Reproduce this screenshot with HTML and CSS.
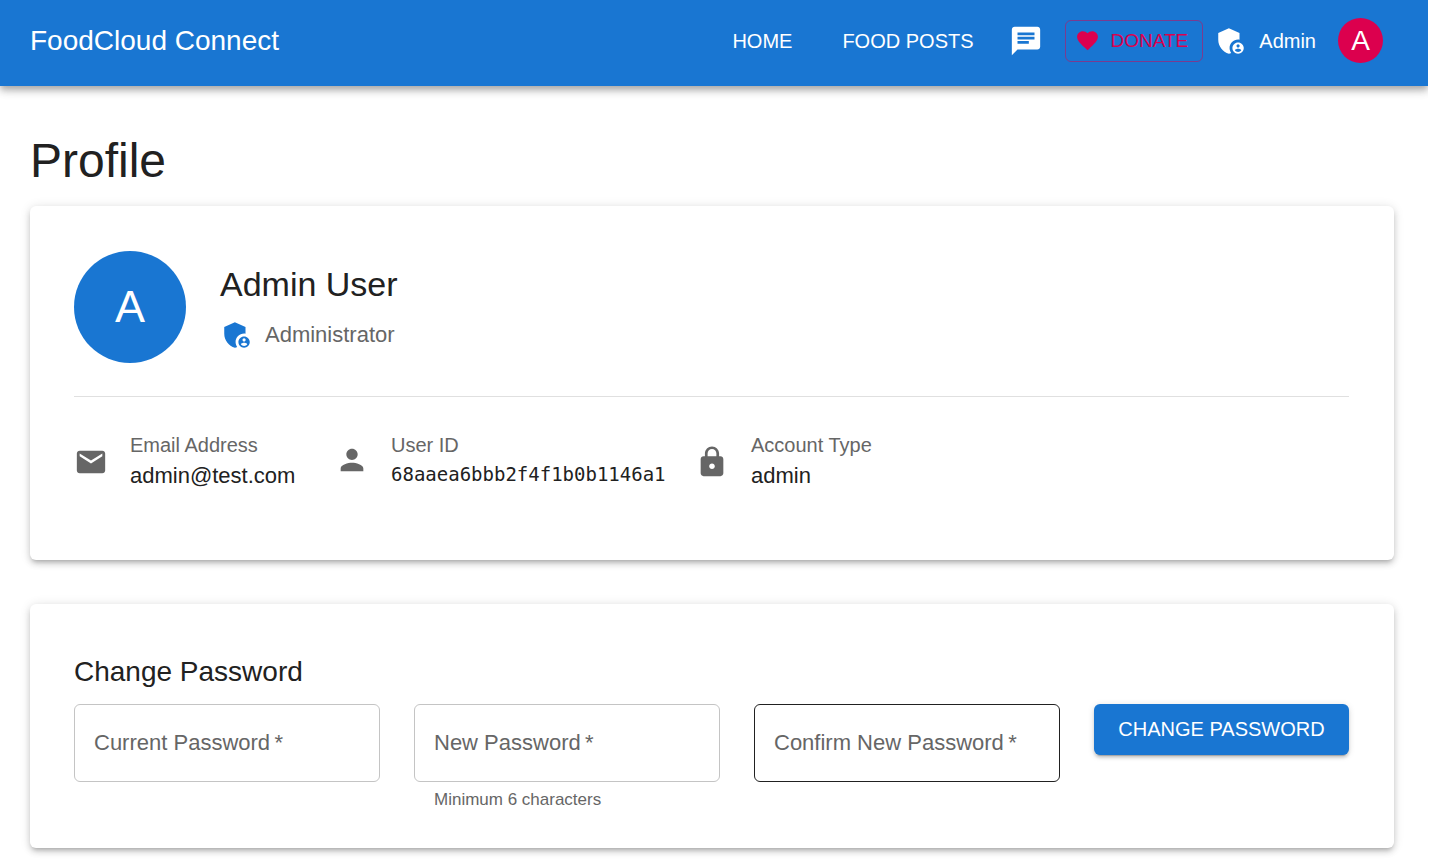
FILE: index.html
```html
<!DOCTYPE html>
<html lang="en">
<head>
<meta charset="utf-8">
<meta name="viewport" content="width=device-width, initial-scale=1">
<title>FoodCloud Connect – Profile</title>
<link rel="stylesheet" href="styles.css">
</head>
<body>
<header class="app-bar">
  <div class="brand">FoodCloud Connect</div>
  <nav class="nav">
    <a class="nav-link" href="#">HOME</a>
    <a class="nav-link" href="#">FOOD POSTS</a>
    <button class="icon-button" type="button" aria-label="Messages">
      <svg class="icon" viewBox="0 0 24 24" aria-hidden="true"><path d="M20 2H4c-1.1 0-1.99.9-1.99 2L2 22l4-4h14c1.1 0 2-.9 2-2V4c0-1.1-.9-2-2-2zM6 9h12v2H6V9zm8 5H6v-2h8v2zm4-6H6V6h12v2z"/></svg>
    </button>
    <button class="donate" type="button">
      <svg class="icon icon-small" viewBox="0 0 24 24" aria-hidden="true"><path d="m12 21.35-1.45-1.32C5.4 15.36 2 12.28 2 8.5 2 5.42 4.42 3 7.5 3c1.74 0 3.41.81 4.5 2.09C13.09 3.81 14.76 3 16.5 3 19.58 3 22 5.42 22 8.5c0 3.78-3.4 6.86-8.55 11.54L12 21.35z"/></svg>
      DONATE
    </button>
    <div class="role">
      <svg class="icon" viewBox="0 0 24 24" aria-hidden="true"><path d="M17 11c.34 0 .67.04 1 .09V6.27L10.5 3 3 6.27v4.91c0 4.54 3.2 8.79 7.5 9.82.55-.13 1.08-.32 1.6-.55-.69-.98-1.1-2.17-1.1-3.45 0-3.31 2.69-6 6-6z"/><path d="M17 13c-2.21 0-4 1.79-4 4s1.79 4 4 4 4-1.79 4-4-1.79-4-4-4zm0 1.38c.62 0 1.12.51 1.12 1.12s-.51 1.12-1.12 1.12-1.12-.51-1.12-1.12.5-1.12 1.12-1.12zm0 5.37c-.93 0-1.74-.46-2.24-1.17.05-.72 1.51-1.08 2.24-1.08s2.19.36 2.24 1.08c-.5.71-1.31 1.17-2.24 1.17z"/></svg>
      <span>Admin</span>
    </div>
    <button class="avatar avatar-small" type="button" aria-label="Account menu">A</button>
  </nav>
</header>

<main class="page">
  <h1 class="page-title">Profile</h1>

  <section class="card">
    <div class="identity">
      <div class="avatar avatar-large">A</div>
      <div class="identity-text">
        <h2 class="user-name">Admin User</h2>
        <div class="user-role">
          <svg class="icon icon-primary" viewBox="0 0 24 24" aria-hidden="true"><path d="M17 11c.34 0 .67.04 1 .09V6.27L10.5 3 3 6.27v4.91c0 4.54 3.2 8.79 7.5 9.82.55-.13 1.08-.32 1.6-.55-.69-.98-1.1-2.17-1.1-3.45 0-3.31 2.69-6 6-6z"/><path d="M17 13c-2.21 0-4 1.79-4 4s1.79 4 4 4 4-1.79 4-4-1.79-4-4-4zm0 1.38c.62 0 1.12.51 1.12 1.12s-.51 1.12-1.12 1.12-1.12-.51-1.12-1.12.5-1.12 1.12-1.12zm0 5.37c-.93 0-1.74-.46-2.24-1.17.05-.72 1.51-1.08 2.24-1.08s2.19.36 2.24 1.08c-.5.71-1.31 1.17-2.24 1.17z"/></svg>
          <span>Administrator</span>
        </div>
      </div>
    </div>
    <hr class="divider">
    <div class="details">
      <div class="detail">
        <svg class="icon" viewBox="0 0 24 24" aria-hidden="true"><path d="M20 4H4c-1.1 0-1.99.9-1.99 2L2 18c0 1.1.9 2 2 2h16c1.1 0 2-.9 2-2V6c0-1.1-.9-2-2-2zm0 4-8 5-8-5V6l8 5 8-5v2z"/></svg>
        <div>
          <div class="detail-label">Email Address</div>
          <div class="detail-value">admin@test.com</div>
        </div>
      </div>
      <div class="detail">
        <svg class="icon" viewBox="0 0 24 24" aria-hidden="true"><path d="M12 12c2.21 0 4-1.79 4-4s-1.79-4-4-4-4 1.79-4 4 1.79 4 4 4zm0 2c-2.67 0-8 1.34-8 4v2h16v-2c0-2.66-5.33-4-8-4z"/></svg>
        <div>
          <div class="detail-label">User ID</div>
          <div class="detail-value detail-code">68aaea6bbb2f4f1b0b1146a1</div>
        </div>
      </div>
      <div class="detail">
        <svg class="icon" viewBox="0 0 24 24" aria-hidden="true"><path d="M18 8h-1V6c0-2.76-2.24-5-5-5S7 3.24 7 6v2H6c-1.1 0-2 .9-2 2v10c0 1.1.9 2 2 2h12c1.1 0 2-.9 2-2V10c0-1.1-.9-2-2-2zm-6 9c-1.1 0-2-.9-2-2s.9-2 2-2 2 .9 2 2-.9 2-2 2zm3.1-9H8.9V6c0-1.71 1.39-3.1 3.1-3.1s3.1 1.39 3.1 3.1v2z"/></svg>
        <div>
          <div class="detail-label">Account Type</div>
          <div class="detail-value">admin</div>
        </div>
      </div>
    </div>
  </section>

  <section class="card card-form">
    <h2 class="section-title">Change Password</h2>
    <form class="password-form">
      <div class="field">
        <input class="field-input" type="password" id="current-password" required>
        <label class="field-label" for="current-password">Current Password&thinsp;*</label>
      </div>
      <div class="field">
        <input class="field-input" type="password" id="new-password" aria-describedby="new-password-help" required>
        <label class="field-label" for="new-password">New Password&thinsp;*</label>
        <p class="field-help" id="new-password-help">Minimum 6 characters</p>
      </div>
      <div class="field">
        <input class="field-input field-input-active" type="password" id="confirm-password" required>
        <label class="field-label" for="confirm-password">Confirm New Password&thinsp;*</label>
      </div>
      <button class="submit" type="submit">CHANGE PASSWORD</button>
    </form>
  </section>
</main>
</body>
</html>
```
FILE: styles.css
```css
:root {
  --primary: #1976d2;
  --secondary: #dc004e;
  --text: #212121;
  --muted: #666666;
  --shadow: 0 4px 1px -3px rgba(0, 0, 0, 0.2), 0 3px 3px 0 rgba(0, 0, 0, 0.14), 0 1px 7px 0 rgba(0, 0, 0, 0.12);
  --shadow-card: 0 4px 4px -3px rgba(0, 0, 0, 0.2), 0 4px 6px 0 rgba(0, 0, 0, 0.14), 0 1px 11px 0 rgba(0, 0, 0, 0.12);
  --shadow-bar: 0 3px 6px -1px rgba(0, 0, 0, 0.2), 0 6px 7px 0 rgba(0, 0, 0, 0.14), 0 1px 14px 0 rgba(0, 0, 0, 0.12);
}

* {
  box-sizing: border-box;
}

body {
  margin: 0 12px 0 0;
  background: #ffffff;
  color: var(--text);
  font-family: "Liberation Sans", Arial, sans-serif;
  font-size: 22px;
  line-height: 34px;
}

button,
input {
  font-family: inherit;
}

h1,
h2,
p {
  margin: 0;
  font-weight: 400;
}

.icon {
  display: block;
  flex: none;
  width: 34px;
  height: 34px;
  fill: currentColor;
}

.icon-small {
  width: 25px;
  height: 25px;
}

.icon-primary {
  color: var(--primary);
}

.app-bar {
  display: flex;
  align-items: center;
  justify-content: space-between;
  padding: 18px 45px 23px 30px;
  background: var(--primary);
  color: #ffffff;
  box-shadow: var(--shadow-bar);
}

.brand {
  font-size: 28px;
}

.nav {
  display: flex;
  align-items: center;
  font-size: 20px;
}

.nav-link {
  margin-right: 4px;
  padding: 0 23px;
  color: inherit;
  text-decoration: none;
}

.icon-button {
  margin: 0 22px 0 8px;
  padding: 0;
  border: 0;
  background: none;
  color: inherit;
}

.donate {
  display: flex;
  align-items: center;
  gap: 11px;
  height: 42px;
  margin-right: 11px;
  padding: 0 14px 0 9px;
  border: 1px solid rgba(220, 0, 78, 0.5);
  border-radius: 6px;
  background: none;
  color: var(--secondary);
  font-size: 19px;
}

.role {
  display: flex;
  align-items: center;
  gap: 11px;
  margin-right: 22px;
}

.avatar {
  display: flex;
  flex: none;
  align-items: center;
  justify-content: center;
  padding: 0;
  border: 0;
  border-radius: 50%;
  color: #ffffff;
}

.avatar-small {
  width: 45px;
  height: 45px;
  background: var(--secondary);
  font-size: 28px;
}

.avatar-large {
  width: 112px;
  height: 112px;
  background: var(--primary);
  font-size: 45px;
}

.page {
  padding: 45px 34px 20px 30px;
}

.page-title {
  margin-bottom: 16px;
  font-size: 48px;
  line-height: 59px;
}

.card {
  margin-bottom: 44px;
  padding: 45px 45px 67px 44px;
  border-radius: 6px;
  background: #ffffff;
  box-shadow: var(--shadow-card);
}

.card-form {
  margin-bottom: 0;
  padding-bottom: 34px;
}

.identity {
  display: flex;
  align-items: center;
  gap: 34px;
}

.user-name {
  margin-bottom: 11px;
  font-size: 34px;
  line-height: 45px;
}

.user-role {
  display: flex;
  align-items: center;
  gap: 11px;
  color: var(--muted);
}

.divider {
  height: 1px;
  margin: 33px 0 34px;
  border: 0;
  background: #e0e0e0;
}

.details {
  display: grid;
  grid-template-columns: 227px 326px auto;
  align-items: start;
  gap: 34px;
}

.detail {
  display: flex;
  align-items: center;
  gap: 22px;
  color: var(--muted);
}

.detail-label {
  font-size: 20px;
  line-height: 28px;
}

.detail-value {
  color: var(--text);
}

.detail-code {
  font-family: "DejaVu Sans Mono", monospace;
  font-size: 19px;
  line-height: 30px;
}

.section-title {
  margin-bottom: 10px;
  font-size: 28px;
  line-height: 45px;
}

.password-form {
  display: flex;
  align-items: flex-start;
  gap: 34px;
}

.field {
  position: relative;
  flex: 1;
  min-width: 0;
}

.field-input {
  display: block;
  width: 100%;
  height: 78px;
  padding: 0 19px;
  border: 1px solid #c4c4c4;
  border-radius: 6px;
  background: none;
  font-size: 22px;
}

.field-input-active {
  border-color: var(--text);
}

.field-label {
  position: absolute;
  top: 22px;
  left: 20px;
  color: var(--muted);
  white-space: nowrap;
  pointer-events: none;
}

.field-input:focus + .field-label,
.field-input:valid + .field-label {
  top: -17px;
  padding: 0 4px;
  background: #ffffff;
  font-size: 17px;
}

.field-help {
  margin: 4px 20px 0;
  color: var(--muted);
  font-size: 17px;
  line-height: 28px;
}

.submit {
  min-width: 255px;
  height: 51px;
  padding: 0 22px;
  border: 0;
  border-radius: 6px;
  background: var(--primary);
  color: #ffffff;
  font-size: 20px;
  white-space: nowrap;
  box-shadow: var(--shadow);
}
```
